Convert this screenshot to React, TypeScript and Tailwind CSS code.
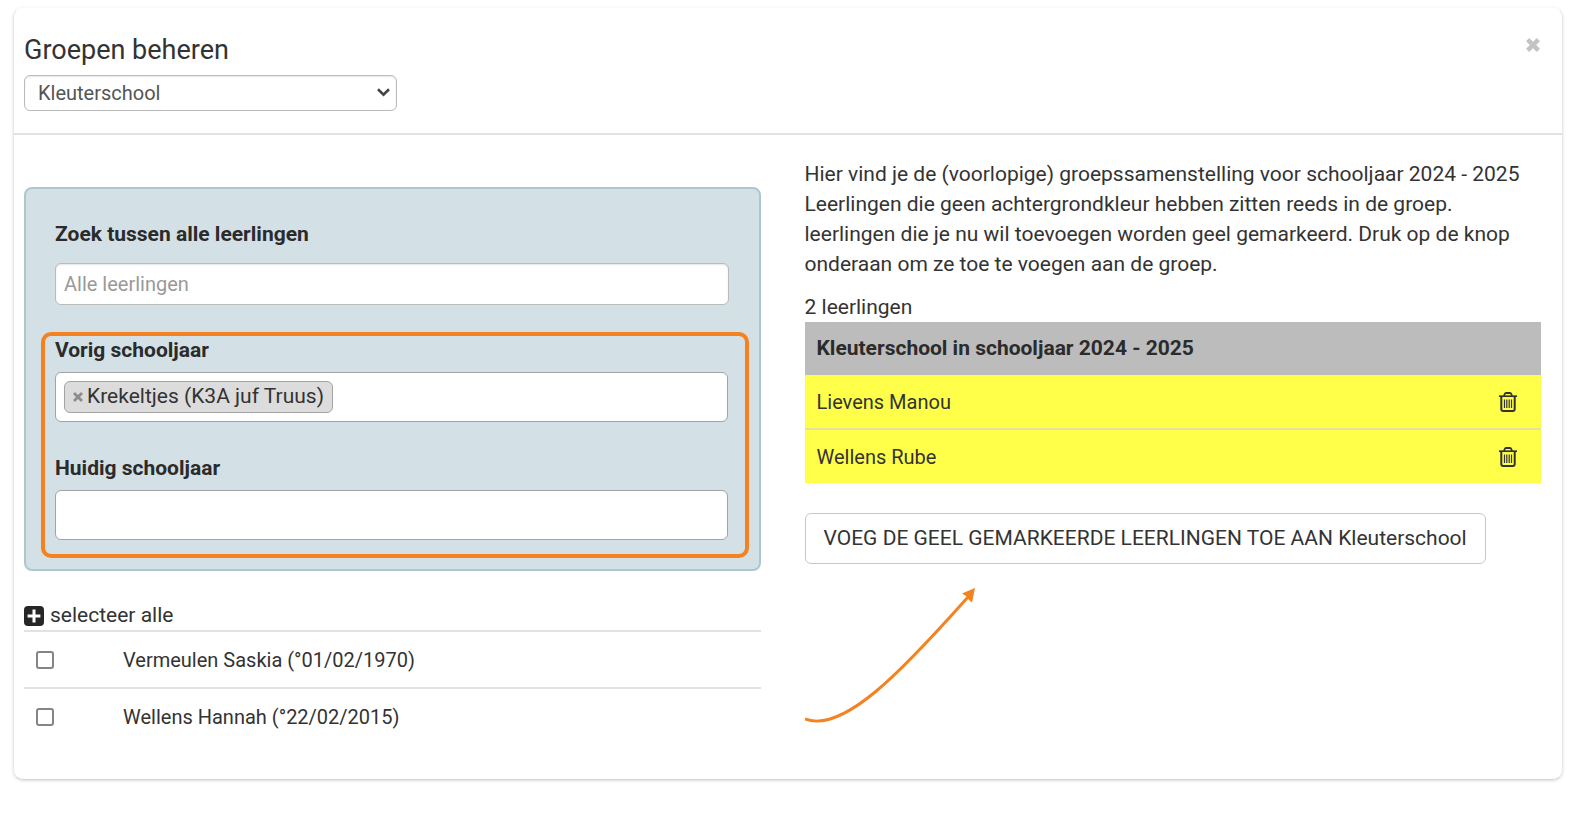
import { useState } from 'react';

const candidates = [
  { id: 1, name: 'Vermeulen Saskia', born: '01/02/1970' },
  { id: 2, name: 'Wellens Hannah', born: '22/02/2015' },
];

const CloseIcon = () => (
  <svg width="14" height="14" viewBox="0 0 14 14" fill="none" stroke="currentColor" strokeWidth="4.4" aria-hidden="true">
    <path d="M1.6 1.6 12.4 12.4M12.4 1.6 1.6 12.4" />
  </svg>
);

const PlusSquareIcon = () => (
  <svg width="20" height="20" viewBox="0 0 20 20" aria-hidden="true">
    <rect width="20" height="20" rx="4" fill="#262626" />
    <path d="M10 3.6v12.8M3.6 10h12.8" stroke="#fff" strokeWidth="3" />
  </svg>
);

const TrashIcon = () => (
  <svg width="18" height="20" viewBox="0 0 18 20" fill="none" stroke="currentColor" aria-hidden="true">
    <path d="M0 4.2h18" strokeWidth="1.7" />
    <path d="M5 4 5.7 2Q6.1 1 7 1h4q.9 0 1.3 1L13 4" strokeWidth="1.8" />
    <path d="M2.3 4v13q0 2 2 2h9.4q2 0 2-2V4" strokeWidth="2" />
    <path d="M5.5 7.5V16M7.800 7.500V16M10.200 7.500V16M12.500 7.500V16" strokeWidth="1.2" />
  </svg>
);

const App = () => {
  const [members, setMembers] = useState(['Lievens Manou', 'Wellens Rube']);
  const [previousGroups, setPreviousGroups] = useState(['Krekeltjes (K3A juf Truus)']);
  const [selected, setSelected] = useState<number[]>([]);

  const toggle = (id: number) => {
    setSelected((ids) => (ids.includes(id) ? ids.filter((i) => i !== id) : [...ids, id]));
  };

  return (
    <main className="pt-[7px] pl-[13px] pr-[10px] pb-12 bg-white font-[Roboto,'Liberation_Sans',sans-serif] text-[21px] text-[#333]">
      <div className="rounded-[10px] border border-t-[#fafafa] border-x-[#e8e8e8] border-b-[#d4d4d4] shadow-[0_1px_3px_rgba(0,0,0,0.14)]">
        {/* Header */}
        <header className="flex items-start justify-between pt-6 pl-[10px] pr-[22px] pb-[22px] border-b-2 border-[#e2e2e2]">
          <div className="flex flex-col">
            <h1 className="text-[27px] leading-9">Groepen beheren</h1>
            <div className="relative mt-[7px] w-[373px]">
              <select
                aria-label="Groep"
                className="block w-full h-9 pl-[13px] pr-8 appearance-none rounded-md border border-[#bbb] bg-white text-xl text-[#555] shadow-[inset_0_1px_2px_rgba(0,0,0,0.1)]"
              >
                <option>Kleuterschool</option>
              </select>
              <svg
                className="absolute right-[7px] top-[13px] pointer-events-none"
                width="13"
                height="9"
                viewBox="0 0 13 9"
                fill="none"
                stroke="#444"
                strokeWidth="2.6"
                aria-hidden="true"
              >
                <path d="M1 1.300 6.500 6.600 12 1.300" />
              </svg>
            </div>
          </div>
          <button type="button" aria-label="Sluiten" className="mt-[6px] text-[#c4c4c4]">
            <CloseIcon />
          </button>
        </header>

        <div className="grid grid-cols-2 gap-11 pl-[10px] pr-[21px] pt-6 pb-[35px]">
          {/* Search column */}
          <section>
            <div className="mt-7 pt-[31px] pb-[11px] pl-[15px] pr-[10px] rounded-lg border-2 border-[#adc7d1] bg-[#d3e0e6]">
              <div className="pl-[14px] pr-5">
                <label htmlFor="search" className="block leading-7 font-bold text-[#2b2b2b]">
                  Zoek tussen alle leerlingen
                </label>
                <input
                  id="search"
                  type="text"
                  placeholder="Alle leerlingen"
                  className="block mt-[15px] w-full h-[42px] px-2 rounded-md border border-[#bbb] bg-white text-xl shadow-[inset_0_1px_2px_rgba(0,0,0,0.1)] placeholder:text-[#999]"
                />
              </div>

              <div className="mt-[27px] pl-[10px] pr-[17px] pb-[14px] rounded-[10px] border-4 border-[#f58220]">
                <label htmlFor="previous" className="block leading-7 font-bold text-[#2b2b2b]">
                  Vorig schooljaar
                </label>
                <div className="flex items-center mt-2 h-[50px] px-2 gap-2 rounded-md border border-[#a3a3a3] bg-white">
                  {previousGroups.map((group) => (
                    <span
                      key={group}
                      className="flex items-center gap-1 h-8 px-2 rounded-md border border-[#a3a3a3] bg-[#dcdcdc] whitespace-nowrap"
                    >
                      <button
                        type="button"
                        aria-label={`Verwijder ${group}`}
                        onClick={() => setPreviousGroups((groups) => groups.filter((g) => g !== group))}
                        className="text-[#8c8c8c]"
                      >
                        <svg width="10" height="10" viewBox="0 0 10 10" stroke="currentColor" strokeWidth="2.8">
                          <path d="M1 1 9 9M9 1 1 9" />
                        </svg>
                      </button>
                      {group}
                    </span>
                  ))}
                  <input id="previous" type="text" className="flex-1 min-w-0 h-8 outline-none" />
                </div>
                <label htmlFor="current" className="block mt-8 leading-7 font-bold text-[#2b2b2b]">
                  Huidig schooljaar
                </label>
                <input
                  id="current"
                  type="text"
                  className="block mt-2 w-full h-[50px] px-2 rounded-md border border-[#a3a3a3] bg-white"
                />
              </div>
            </div>

            <button
              type="button"
              onClick={() => setSelected(candidates.map((c) => c.id))}
              className="flex items-center gap-[6px] mt-[31px] h-7"
            >
              <PlusSquareIcon />
              selecteer alle
            </button>
            <ul className="text-xl">
              {candidates.map((c) => (
                <li key={c.id} className="border-t-2 border-[#e2e2e2]">
                  <label className="flex items-center h-[55px] pl-3">
                    <input
                      type="checkbox"
                      checked={selected.includes(c.id)}
                      onChange={() => toggle(c.id)}
                      className="size-[18px] mr-[69px] appearance-none rounded-[3px] border-2 border-[#858585] bg-white checked:bg-[#333]"
                    />
                    {c.name} (°{c.born})
                  </label>
                </li>
              ))}
            </ul>
          </section>

          {/* Group column */}
          <section>
            <p className="leading-[30px]">
              Hier vind je de (voorlopige) groepssamenstelling voor schooljaar 2024 - 2025
              <br />
              Leerlingen die geen achtergrondkleur hebben zitten reeds in de groep.
              <br />
              leerlingen die je nu wil toevoegen worden geel gemarkeerd. Druk op de knop onderaan om ze toe te voegen
              aan de groep.
            </p>
            <p className="mt-[13px] leading-[30px]">{members.length} leerlingen</p>
            <table className="w-full text-left">
              <thead>
                <tr className="h-[53px] bg-[#bcbcbc]">
                  <th colSpan={2} className="px-3 font-bold text-[#2b2b2b]">
                    Kleuterschool in schooljaar 2024 - 2025
                  </th>
                </tr>
              </thead>
              <tbody className="divide-y-2 divide-[#e2e2a0] bg-[#ffff4a] text-xl">
                {members.map((name) => (
                  <tr key={name} className="h-[54px]">
                    <td className="px-3">{name}</td>
                    <td className="pr-6">
                      <button
                        type="button"
                        aria-label={`Verwijder ${name}`}
                        onClick={() => setMembers((list) => list.filter((n) => n !== name))}
                        className="block ml-auto"
                      >
                        <TrashIcon />
                      </button>
                    </td>
                  </tr>
                ))}
              </tbody>
            </table>
            <button type="button" className="mt-[30px] h-[51px] px-[18px] rounded-md border border-[#c8c8c8] bg-white">
              VOEG DE GEEL GEMARKEERDE LEERLINGEN TOE AAN Kleuterschool
            </button>
            <svg className="mt-6" width="174" height="136" viewBox="0 0 174 136" aria-hidden="true">
              <path d="M0 131C38 146 98 82 163 9" fill="none" stroke="#f58220" strokeWidth="3" />
              <path d="M170 0 157 5.500 161 8 164 12 167 14.500Z" fill="#f58220" />
            </svg>
          </section>
        </div>
      </div>
    </main>
  );
};

export default App;
